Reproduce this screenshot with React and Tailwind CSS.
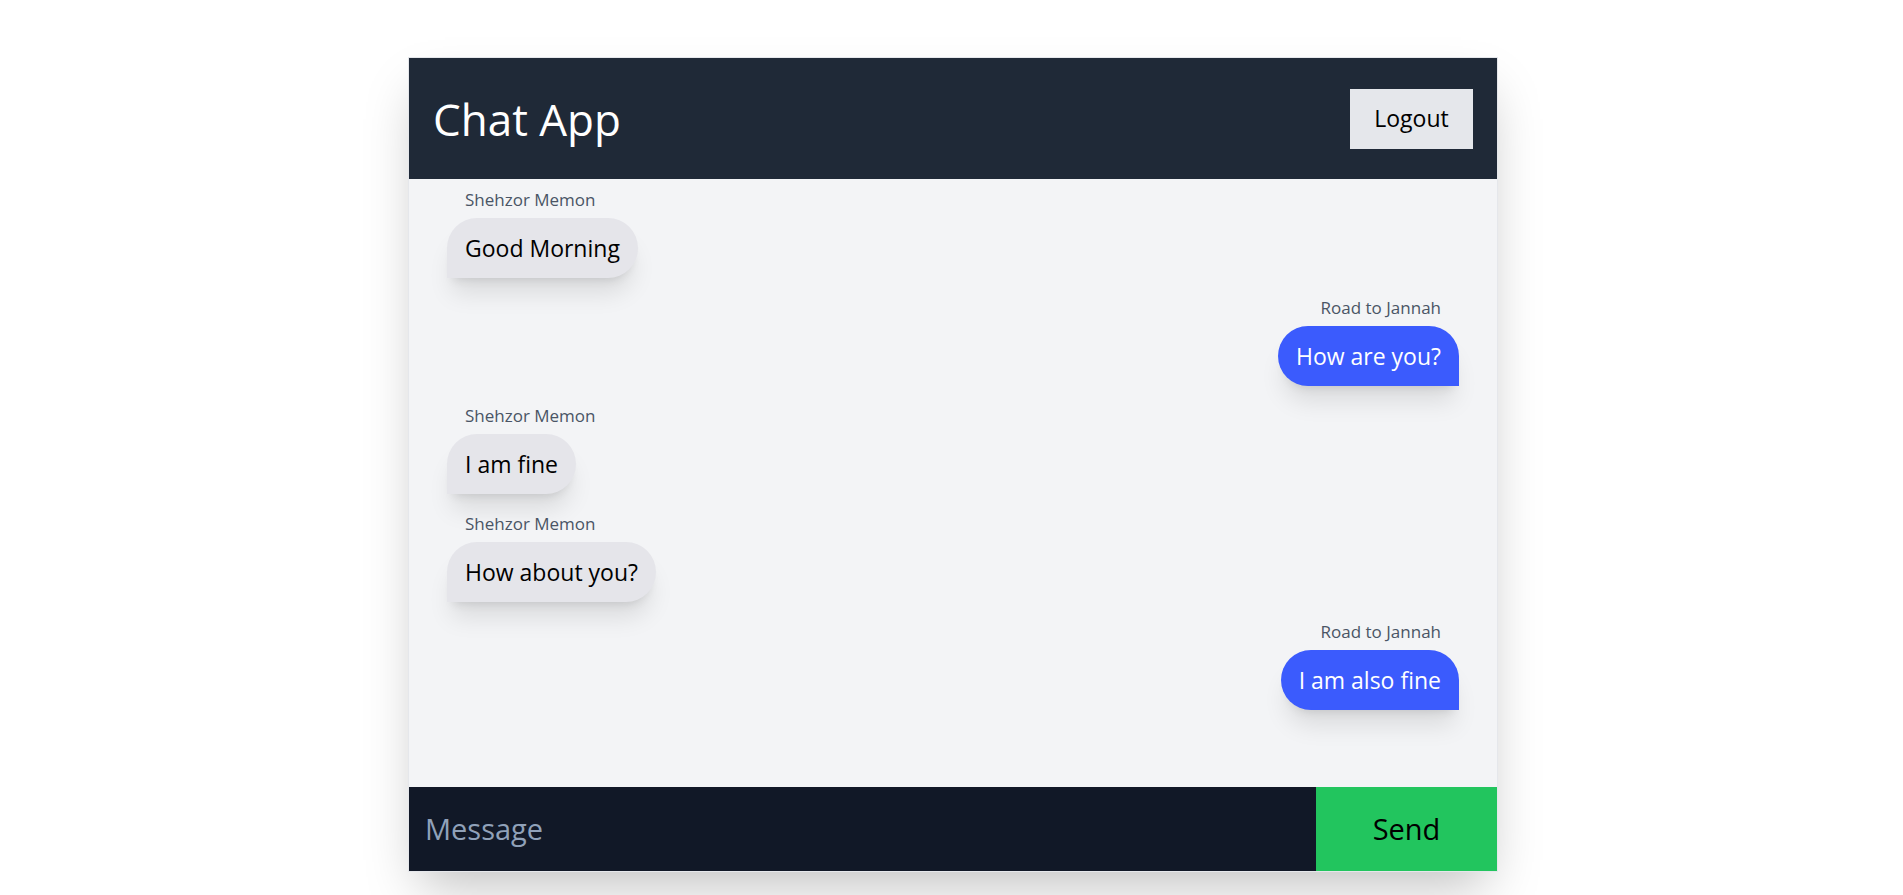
import React, { useState } from "react";

const messages = [
  { user: "Shehzor Memon", text: "Good Morning", mine: false },
  { user: "Road to Jannah", text: "How are you?", mine: true },
  { user: "Shehzor Memon", text: "I am fine", mine: false },
  { user: "Shehzor Memon", text: "How about you?", mine: false },
  { user: "Road to Jannah", text: "I am also fine", mine: true },
];

export default function App() {
  const [text, setText] = useState("");

  return (
    <div
      className="flex min-h-screen justify-center bg-white pl-[3px] pt-[57px]"
      style={{ fontFamily: '"Open Sans", "Noto Sans", sans-serif' }}
    >
      <div className="h-fit w-[1090px] border border-gray-200 shadow-2xl">
        {/* header */}
        <div className="flex h-[121px] items-center justify-between bg-[#1f2937] px-6">
          <h1 className="text-[44px] leading-none text-white">Chat App</h1>
          <button className="h-[60px] w-[123px] bg-gray-200 text-[23px] text-black">
            Logout
          </button>
        </div>

        {/* messages */}
        <div className="flex h-[608px] flex-col gap-4 bg-gray-100 px-[38px] pt-[7px]">
          {messages.map((m, i) => (
            <div
              key={i}
              className={m.mine ? "flex flex-col items-end" : "flex flex-col items-start"}
            >
              <div className="mb-1 px-[18px] text-[17px] leading-7 text-gray-600">
                {m.user}
              </div>
              <div
                className={
                  m.mine
                    ? "h-[60px] rounded-l-[30px] rounded-tr-[30px] bg-[#3b5bfd] px-[18px] py-[14px] text-[23px] leading-8 text-white shadow-xl"
                    : "h-[60px] rounded-r-[30px] rounded-tl-[30px] bg-[#e5e5ea] px-[18px] py-[14px] text-[23px] leading-8 text-black shadow-xl"
                }
              >
                {m.text}
              </div>
            </div>
          ))}
        </div>

        {/* input */}
        <form
          className="flex h-[84px]"
          onSubmit={(e) => {
            e.preventDefault();
            setText("");
          }}
        >
          <input
            className="min-w-0 flex-1 bg-[#111827] px-4 text-[29px] text-white outline-none placeholder:text-slate-400"
            placeholder="Message"
            value={text}
            onChange={(e) => setText(e.target.value)}
          />
          <button type="submit" className="w-[181px] bg-[#22c55e] text-[29px] text-black">
            Send
          </button>
        </form>
      </div>
    </div>
  );
}
